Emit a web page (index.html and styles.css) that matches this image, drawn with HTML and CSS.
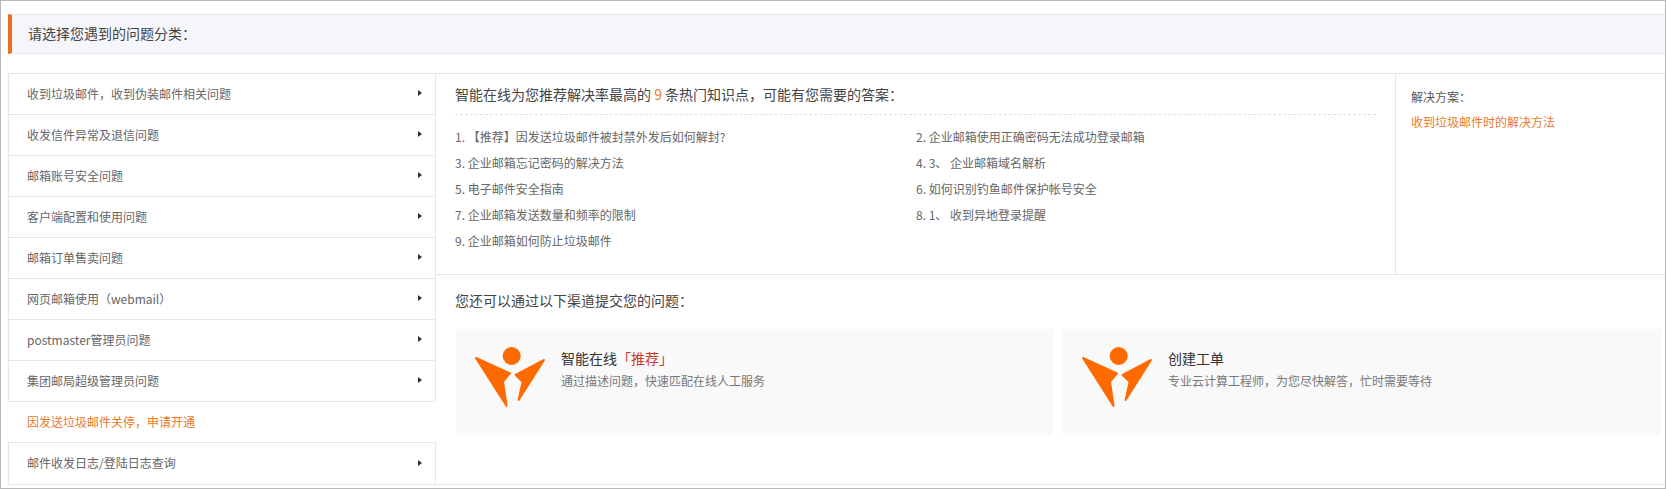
FILE: index.html
```html
<!DOCTYPE html>
<html lang="zh-CN">
<head>
<meta charset="utf-8">
<title>问题分类</title>
<link rel="stylesheet" href="styles.css">
</head>
<body>
<div class="frame">
  <div class="heading">请选择您遇到的问题分类：</div>
  <div class="layout">
    <ul class="side">
      <li class="row">收到垃圾邮件，收到伪装邮件相关问题<i class="arrow"></i></li>
      <li class="row">收发信件异常及退信问题<i class="arrow"></i></li>
      <li class="row">邮箱账号安全问题<i class="arrow"></i></li>
      <li class="row">客户端配置和使用问题<i class="arrow"></i></li>
      <li class="row">邮箱订单售卖问题<i class="arrow"></i></li>
      <li class="row">网页邮箱使用（webmail）<i class="arrow"></i></li>
      <li class="row">postmaster管理员问题<i class="arrow"></i></li>
      <li class="row">集团邮局超级管理员问题<i class="arrow"></i></li>
      <li class="row row-link">因发送垃圾邮件关停，申请开通</li>
      <li class="row">邮件收发日志/登陆日志查询<i class="arrow"></i></li>
    </ul>
    <div class="main">
      <div class="top">
        <div class="kb">
          <div class="kb-title">智能在线为您推荐解决率最高的 <span class="hl">9</span> 条热门知识点，可能有您需要的答案：</div>
          <ol class="kb-list">
            <li>1. 【推荐】因发送垃圾邮件被封禁外发后如何解封?</li>
            <li>2. 企业邮箱使用正确密码无法成功登录邮箱</li>
            <li>3. 企业邮箱忘记密码的解决方法</li>
            <li>4. 3、 企业邮箱域名解析</li>
            <li>5. 电子邮件安全指南</li>
            <li>6. 如何识别钓鱼邮件保护帐号安全</li>
            <li>7. 企业邮箱发送数量和频率的限制</li>
            <li>8. 1、 收到异地登录提醒</li>
            <li>9. 企业邮箱如何防止垃圾邮件</li>
          </ol>
        </div>
        <div class="sol">
          <div class="sol-title">解决方案：</div>
          <div class="sol-link">收到垃圾邮件时的解决方法</div>
        </div>
      </div>
      <div class="bottom">
        <div class="bottom-title">您还可以通过以下渠道提交您的问题：</div>
        <div class="cards">
          <div class="card">
            <svg class="logo" viewBox="0 0 72 64" width="72" height="64" aria-hidden="true">
              <circle cx="37.7" cy="11" r="9"/>
              <path class="wing" d="M2 13 L36 28.3 L29 36.7 L32.6 61 Z"/>
              <path class="wing" d="M70 15 L41.7 30 L48.6 36.7 L44.6 55 Z"/>
            </svg>
            <div class="card-text">
              <div class="card-title">智能在线<span class="rec">「推荐」</span></div>
              <div class="card-sub">通过描述问题，快速匹配在线人工服务</div>
            </div>
          </div>
          <div class="card">
            <svg class="logo" viewBox="0 0 72 64" width="72" height="64" aria-hidden="true">
              <circle cx="37.7" cy="11" r="9"/>
              <path class="wing" d="M2 13 L36 28.3 L29 36.7 L32.6 61 Z"/>
              <path class="wing" d="M70 15 L41.7 30 L48.6 36.7 L44.6 55 Z"/>
            </svg>
            <div class="card-text">
              <div class="card-title">创建工单</div>
              <div class="card-sub">专业云计算工程师，为您尽快解答，忙时需要等待</div>
            </div>
          </div>
        </div>
      </div>
    </div>
  </div>
</div>
</body>
</html>
```
FILE: styles.css
```css
* { box-sizing: border-box; }
html, body { margin: 0; padding: 0; background: #fff; }
body {
  font-family: "Noto Sans CJK SC", "Noto Sans", sans-serif;
  font-size: 12px;
  color: #666;
  overflow: hidden;
}
ul, ol { list-style: none; margin: 0; padding: 0; }

.frame {
  width: 1666px;
  height: 489px;
  border: 1px solid #b8b8b8;
  padding: 13px 0 0 7px;
}

.heading {
  height: 40px;
  line-height: 36px;
  padding-left: 16px;
  background: #f5f6fa;
  border: 1px solid #e8e8e8;
  border-left: 4px solid #e8711f;
  border-right: 0;
  font-size: 14px;
  color: #444;
}

.layout { display: flex; margin-top: 19px; height: 412px; }

.side { width: 428px; flex: none; }
.row {
  display: flex;
  align-items: center;
  justify-content: space-between;
  height: 41px;
  padding: 0 13px 2px 18px;
  border: 1px solid #e6e6e6;
  border-bottom: 0;
}
.row:last-child { height: 43px; border-bottom: 1px solid #e6e6e6; }
.row-link { color: #e8792b; border-color: transparent; border-top-color: #e6e6e6; }
.arrow {
  width: 0;
  height: 0;
  border-left: 4px solid #333;
  border-top: 3px solid transparent;
  border-bottom: 3px solid transparent;
}

.main {
  flex: 1;
  min-width: 0;
  border-top: 1px solid #e6e6e6;
  border-bottom: 1px solid #e6e6e6;
}
.top { display: flex; height: 201px; border-bottom: 1px solid #e6e6e6; }
.kb { width: 959px; flex: none; padding: 0 19px 0 19px; }
.kb-title {
  height: 41px;
  line-height: 41px;
  font-size: 14px;
  color: #444;
  border-bottom: 1px dashed #e0e0e0;
}
.hl { color: #e8792b; }
.kb-list {
  display: grid;
  grid-template-columns: 461px 1fr;
  grid-auto-rows: 26px;
  padding-top: 9px;
}
.kb-list li { line-height: 26px; }

.sol { flex: 1; padding: 13px 0 0 15px; border-left: 1px solid #e6e6e6; }
.sol-title { line-height: 20px; color: #555; }
.sol-link { line-height: 20px; margin-top: 5px; color: #e8792b; }

.bottom { padding: 15px 0 0 20px; }
.bottom-title { line-height: 20px; font-size: 14px; color: #444; margin-left: -1px; }
.cards { display: grid; grid-template-columns: 597px 598px; gap: 10px; margin-top: 19px; }
.card {
  display: flex;
  height: 106px;
  padding: 16px 0 0 18px;
  background: #f9f9f9;
}
.logo { flex: none; fill: #ff6a00; }
.wing { stroke: #ff6a00; stroke-width: 2; stroke-linejoin: round; }
.card-text { margin: 3px 0 0 15px; }
.card-title { line-height: 20px; font-size: 14px; color: #333; }
.rec { color: #c9392b; }
.card-sub { line-height: 20px; margin-top: 3px; color: #777; }
```
